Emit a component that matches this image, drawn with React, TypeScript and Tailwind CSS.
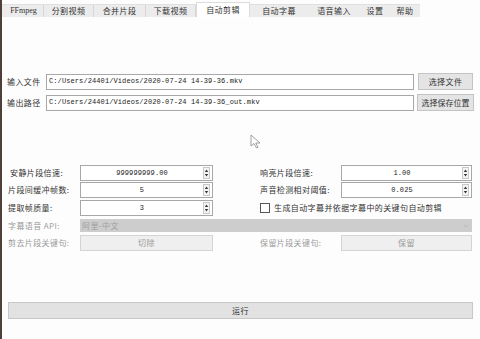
const tabs = [
  { label: 'FFmpeg', w: 'w-[40px]' },
  { label: '分割视频', w: 'w-[50px]' },
  { label: '合并片段', w: 'w-[52px]' },
  { label: '下载视频', w: 'w-[50px]' },
  { label: '自动剪辑', w: 'w-[54px]', active: true },
  { label: '自动字幕', w: 'w-[58px]' },
  { label: '语音输入', w: 'w-[52px]' },
  { label: '设置', w: 'w-[30px]' },
  { label: '帮助', w: 'w-[30px]' },
]

const mono = "font-['Liberation_Mono',monospace] text-[7px] leading-none tracking-[0.1px]"

function SpinBox({ value, w }: { value: string; w: string }) {
  return (
    <div className={`flex h-[16px] ${w} items-center border border-[#a8a8a8] bg-white`}>
      <div className={`flex-1 text-center text-[#222] ${mono}`}>{value}</div>
      <svg className="mr-[2px]" width="7" height="12" viewBox="0 0 7 12">
        <rect x="0.5" y="0.5" width="6" height="11" fill="#f4f4f4" stroke="#c8c8c8" />
        <path d="M1.8 5 L3.5 2.6 L5.2 5 Z" fill="#333" />
        <path d="M1.8 7 L3.5 9.4 L5.2 7 Z" fill="#333" />
      </svg>
    </div>
  )
}

export default function App() {
  return (
    <div className="relative h-[339px] w-[480px] overflow-hidden border-l-2 border-[#4e3f3a] bg-[#fdfdfd] font-['Noto_Sans_CJK_SC',sans-serif] text-[8px] tracking-[0.4px] text-[#333]">
      <div className="mt-[2px] flex h-[15px] items-end">
        <div className="flex h-[13px] items-stretch border-t border-[#e0e0e0] bg-[#ececec] pl-[2px]">
          {tabs.slice(0, 4).map((t) => (
            <div key={t.label} className={`${t.w} flex items-center justify-center border-r border-[#d6d6d6] leading-none ${t.label === 'FFmpeg' ? "font-['Liberation_Serif',serif] text-[8px] tracking-normal" : ''}`}>
              {t.label}
            </div>
          ))}
        </div>
        <div className="flex h-[15px] w-[54px] items-center justify-center border-x border-t border-[#dcdcdc] bg-white leading-none">自动剪辑</div>
        <div className="flex h-[13px] items-stretch border-t border-[#e0e0e0] bg-[#ececec]">
          {tabs.slice(5).map((t) => (
            <div key={t.label} className={`${t.w} flex items-center justify-center leading-none`}>
              {t.label}
            </div>
          ))}
        </div>
      </div>

      <div className="mt-[56px] flex flex-col gap-[4px] pl-[5px] pr-[5px]">
        <div className="flex h-[17px] items-center">
          <span className="w-[39px] whitespace-nowrap">输入文件</span>
          <div className={`flex h-[16px] w-[368px] items-center border border-[#a8a8a8] bg-white pl-[2px] text-[#222] ${mono}`}>C:/Users/24401/Videos/2020-07-24 14-39-36.mkv</div>
          <div className="ml-[4px] flex h-[17px] w-[55px] items-center justify-center border border-[#c4c4c4] bg-[#e4e4e4] leading-none">选择文件</div>
        </div>
        <div className="flex h-[17px] items-center">
          <span className="w-[39px] whitespace-nowrap">输出路径</span>
          <div className={`flex h-[16px] w-[368px] items-center border border-[#a8a8a8] bg-white pl-[2px] text-[#222] ${mono}`}>C:/Users/24401/Videos/2020-07-24 14-39-36_out.mkv</div>
          <div className="ml-[3px] flex h-[17px] w-[57px] items-center justify-center whitespace-nowrap border border-[#c4c4c4] bg-[#e4e4e4] leading-none tracking-normal">选择保存位置</div>
        </div>
      </div>

      <div className="mt-[54px] flex flex-col whitespace-nowrap pl-[6px]">
        <div className="flex h-[16px] items-center">
          <span className="w-[72px] pl-[2px]">安静片段倍速:</span>
          <SpinBox value="999999999.00" w="w-[133px]" />
          <span className="ml-[47px] w-[81px]">响亮片段倍速:</span>
          <SpinBox value="1.00" w="w-[131px]" />
        </div>
        <div className="mt-[1px] flex h-[16px] items-center">
          <span className="w-[72px]">片段间缓冲帧数:</span>
          <SpinBox value="5" w="w-[133px]" />
          <span className="ml-[47px] w-[81px]">声音检测相对阈值:</span>
          <SpinBox value="0.025" w="w-[131px]" />
        </div>
        <div className="mt-[2px] flex h-[16px] items-center">
          <span className="w-[72px]">提取帧质量:</span>
          <SpinBox value="3" w="w-[133px]" />
          <div className="ml-[47px] h-[10px] w-[10px] border border-[#555] bg-white" />
          <span className="ml-[4px]">生成自动字幕并依据字幕中的关键句自动剪辑</span>
        </div>
        <div className="mt-[3px] flex h-[13px] items-center text-[#9a9a9a]">
          <span className="w-[72px]">字幕语音 API:</span>
          <div className="flex h-[13px] w-[392px] items-center justify-between bg-[#cdcdcd] pl-[2px] pr-[3px] leading-none text-[#9e9e9e]">
            <span>阿里-中文</span>
            <svg width="6" height="4" viewBox="0 0 6 4">
              <path d="M0.5 0.5 L3 3 L5.5 0.5" fill="none" stroke="#b4b4b4" strokeWidth="0.8" />
            </svg>
          </div>
        </div>
        <div className="mt-[3px] flex h-[16px] items-center text-[#9a9a9a]">
          <span className="w-[72px]">剪去片段关键句:</span>
          <div className="flex h-[16px] w-[133px] items-center justify-center border border-[#d4d4d4] bg-[#efefef] leading-none">切除</div>
          <span className="ml-[47px] w-[81px]">保留片段关键句:</span>
          <div className="flex h-[16px] w-[131px] items-center justify-center border border-[#d4d4d4] bg-[#efefef] leading-none">保留</div>
        </div>
      </div>

      <div className="mt-[51px] pl-[6px]">
        <div className="flex h-[17px] w-[465px] items-center justify-center border border-[#c8c8c8] bg-[#e2e2e2] leading-none">运行</div>
      </div>

      <svg className="absolute left-[248px] top-[134px]" width="12" height="16" viewBox="0 0 12 16">
        <path d="M1 1 L1 12 L4 9.5 L6.5 14 L8 13.3 L5.8 9 L10 9 Z" fill="white" stroke="#888" strokeWidth="0.8" />
      </svg>
    </div>
  )
}
